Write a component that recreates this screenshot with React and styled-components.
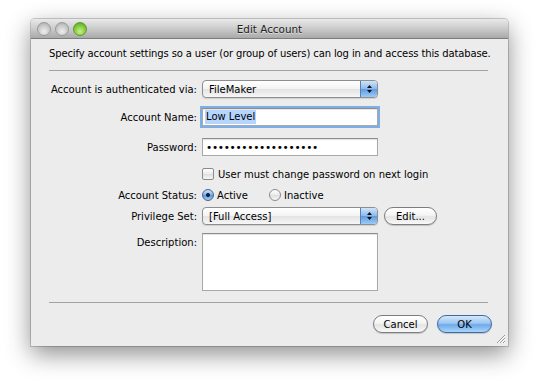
import React from "react";
import styled, { createGlobalStyle } from "styled-components";

const GlobalStyle = createGlobalStyle`
  html, body {
    margin: 0;
    background: #fff;
  }
  body {
    font-family: "DejaVu Sans", "Lucida Grande", sans-serif;
    font-size: 10px;
    color: #000;
  }
`;

const Page = styled.div`
  width: 540px;
  height: 391px;
  padding: 19px 0 0 31px;
  box-sizing: border-box;
  overflow: hidden;
`;

const Window = styled.div`
  position: relative;
  width: 477px;
  height: 327px;
  background: #ececec;
  border-radius: 4px 4px 0 0;
  box-shadow: 0 8px 24px rgba(0, 0, 0, 0.45), 0 0 0 1px rgba(0, 0, 0, 0.18);
  display: flex;
  flex-direction: column;
`;

const TitleBar = styled.div`
  height: 19px;
  display: grid;
  grid-template-columns: 1fr auto 1fr;
  align-items: center;
  background: linear-gradient(#e9e9e9, #cfcfcf 45%, #a9a9a9);
  border-bottom: 1px solid #7d7d7d;
  border-radius: 4px 4px 0 0;
`;

const Lights = styled.div`
  display: flex;
  gap: 4px;
  padding-left: 6px;
`;

const Light = styled.span`
  width: 12px;
  height: 12px;
  border-radius: 50%;
  border: 1px solid ${(p) => (p.$green ? "#5e9a2c" : "#9a9a9a")};
  background: ${(p) =>
    p.$green
      ? "radial-gradient(circle at 50% 70%, #c6f28a, #80c93c 55%, #4f9a1e)"
      : "radial-gradient(circle at 50% 70%, #eeeeee, #c9c9c9 55%, #a7a7a7)"};
`;

const Title = styled.div`
  font-size: 10.4px;
  color: #222;
  text-shadow: 0 1px 0 rgba(255, 255, 255, 0.5);
`;

const Body = styled.div`
  padding: 0 20px 0 18px;
  display: flex;
  flex-direction: column;
`;

const Intro = styled.p`
  margin: 8px 0 0;
  line-height: 14px;
  white-space: nowrap;
  letter-spacing: -0.12px;
`;

const Separator = styled.div`
  height: 1px;
  background: #a2a2a2;
  margin-top: ${(p) => p.$mt}px;
`;

const Row = styled.div`
  display: grid;
  grid-template-columns: 148px auto;
  column-gap: 5px;
  align-items: ${(p) => (p.$top ? "start" : "center")};
  margin-top: ${(p) => p.$mt}px;
`;

const Label = styled.div`
  text-align: right;
  white-space: nowrap;
  padding-top: ${(p) => (p.$top ? 4 : 0)}px;
`;

const Controls = styled.div`
  display: flex;
  align-items: center;
  gap: ${(p) => p.$gap || 0}px;
`;

const Popup = styled.div`
  position: relative;
  width: 176px;
  height: 18px;
  box-sizing: border-box;
  border: 1px solid #8e8e8e;
  border-radius: 4px;
  background: linear-gradient(#ffffff, #f3f3f3 50%, #e3e3e3 51%, #f6f6f6);
  display: flex;
  align-items: center;
  padding-left: 6px;
  box-shadow: 0 1px 1px rgba(0, 0, 0, 0.12);
`;

const Stepper = styled.div`
  margin-left: auto;
  width: 16px;
  height: 16px;
  border-left: 1px solid #5b7fae;
  border-radius: 0 3px 3px 0;
  background: linear-gradient(#cfe4fb, #8ab8ec 50%, #5d9be3 51%, #9ccbf6);
  display: flex;
  align-items: center;
  justify-content: center;
`;

const Field = styled.div`
  width: 176px;
  height: ${(p) => p.$h || 18}px;
  box-sizing: border-box;
  background: #fff;
  border: 1px solid #a9a9a9;
  border-top-color: #8c8c8c;
  box-shadow: ${(p) =>
    p.$focus ? "0 0 0 2px #7eaee6, inset 0 1px 1px rgba(0,0,0,0.1)" : "inset 0 1px 1px rgba(0,0,0,0.12)"};
  padding: 1px 2px;
  display: flex;
  align-items: ${(p) => (p.$h ? "flex-start" : "center")};
`;

const Selected = styled.span`
  background: #b5d5ff;
  padding: 0 1px;
  line-height: 14px;
`;

const Dots = styled.span`
  font-size: 10.5px;
  letter-spacing: -0.3px;
  padding-left: 1px;
`;

const Check = styled.span`
  width: 12px;
  height: 12px;
  box-sizing: border-box;
  border: 1px solid #8a8a8a;
  border-radius: 2px;
  background: linear-gradient(#ffffff, #eaeaea 50%, #dedede 51%, #f7f7f7);
  margin-right: 4px;
`;

const Radio = styled.span`
  width: 12px;
  height: 12px;
  box-sizing: border-box;
  border-radius: 50%;
  border: 1px solid ${(p) => (p.$on ? "#47658d" : "#8a8a8a")};
  background: ${(p) =>
    p.$on
      ? "radial-gradient(circle, #14213b 0 1.8px, transparent 2.2px), linear-gradient(#cbe2fa, #7fb1e8 50%, #5593dc 51%, #a3cff6)"
      : "linear-gradient(#ffffff, #ececec 50%, #dedede 51%, #f7f7f7)"};
  margin-right: 3px;
`;

const Option = styled.span`
  display: flex;
  align-items: center;
  margin-right: ${(p) => p.$mr || 0}px;
`;

const PillButton = styled.button`
  font-family: inherit;
  font-size: 10px;
  color: #000;
  height: 18px;
  width: ${(p) => p.$w}px;
  box-sizing: border-box;
  border-radius: 9px;
  padding: 0;
  border: 1px solid ${(p) => (p.$primary ? "#3f6c9f" : "#7d7d7d")};
  background: ${(p) =>
    p.$primary
      ? "linear-gradient(#d6e8fb, #9cc6f2 45%, #6ea9ea 55%, #a8d6fb)"
      : "linear-gradient(#ffffff, #f4f4f4 45%, #e4e4e4 55%, #f9f9f9)"};
  box-shadow: 0 1px 1px rgba(0, 0, 0, 0.18);
`;

const Footer = styled.div`
  display: flex;
  justify-content: flex-end;
  gap: 9px;
  margin-top: 12px;
  padding-right: 16px;
`;

const Grip = styled.svg`
  position: absolute;
  right: 2px;
  bottom: 2px;
`;

const Arrows = () => (
  <svg width="7" height="10" viewBox="0 0 7 10">
    <path d="M3.5 1 L6 4 L1 4 Z" fill="#111" />
    <path d="M3.5 9 L6 6 L1 6 Z" fill="#111" />
  </svg>
);

export default function App() {
  return (
    <Page>
      <GlobalStyle />
      <Window>
        <TitleBar>
          <Lights>
            <Light />
            <Light />
            <Light $green />
          </Lights>
          <Title>Edit Account</Title>
          <span />
        </TitleBar>
        <Body>
          <Intro>
            Specify account settings so a user (or group of users) can log in and access this database.
          </Intro>
          <Separator $mt={9} />

          <Row $mt={9}>
            <Label>Account is authenticated via:</Label>
            <Popup>
              FileMaker
              <Stepper>
                <Arrows />
              </Stepper>
            </Popup>
          </Row>

          <Row $mt={10}>
            <Label>Account Name:</Label>
            <Field $focus>
              <Selected>Low Level</Selected>
            </Field>
          </Row>

          <Row $mt={12}>
            <Label>Password:</Label>
            <Field>
              <Dots>•••••••••••••••••••</Dots>
            </Field>
          </Row>

          <Row $mt={12}>
            <Label />
            <Controls>
              <Option>
                <Check />
                User must change password on next login
              </Option>
            </Controls>
          </Row>

          <Row $mt={9}>
            <Label>Account Status:</Label>
            <Controls>
              <Option $mr={21}>
                <Radio $on />
                Active
              </Option>
              <Option>
                <Radio />
                Inactive
              </Option>
            </Controls>
          </Row>

          <Row $mt={6}>
            <Label>Privilege Set:</Label>
            <Controls $gap={6}>
              <Popup>
                [Full Access]
                <Stepper>
                  <Arrows />
                </Stepper>
              </Popup>
              <PillButton $w={53}>Edit...</PillButton>
            </Controls>
          </Row>

          <Row $mt={8} $top>
            <Label $top>Description:</Label>
            <Field $h={58} />
          </Row>

          <Separator $mt={11} />
        </Body>
        <Footer>
          <PillButton $w={55}>Cancel</PillButton>
          <PillButton $w={55} $primary>
            OK
          </PillButton>
        </Footer>
        <Grip width="11" height="11" viewBox="0 0 11 11">
          <path d="M10 2 L2 10 M10 5 L5 10 M10 8 L8 10" stroke="#9a9a9a" strokeWidth="1" />
          <path d="M10 3 L3 10 M10 6 L6 10 M10 9 L9 10" stroke="#fff" strokeWidth="1" />
        </Grip>
      </Window>
    </Page>
  );
}
